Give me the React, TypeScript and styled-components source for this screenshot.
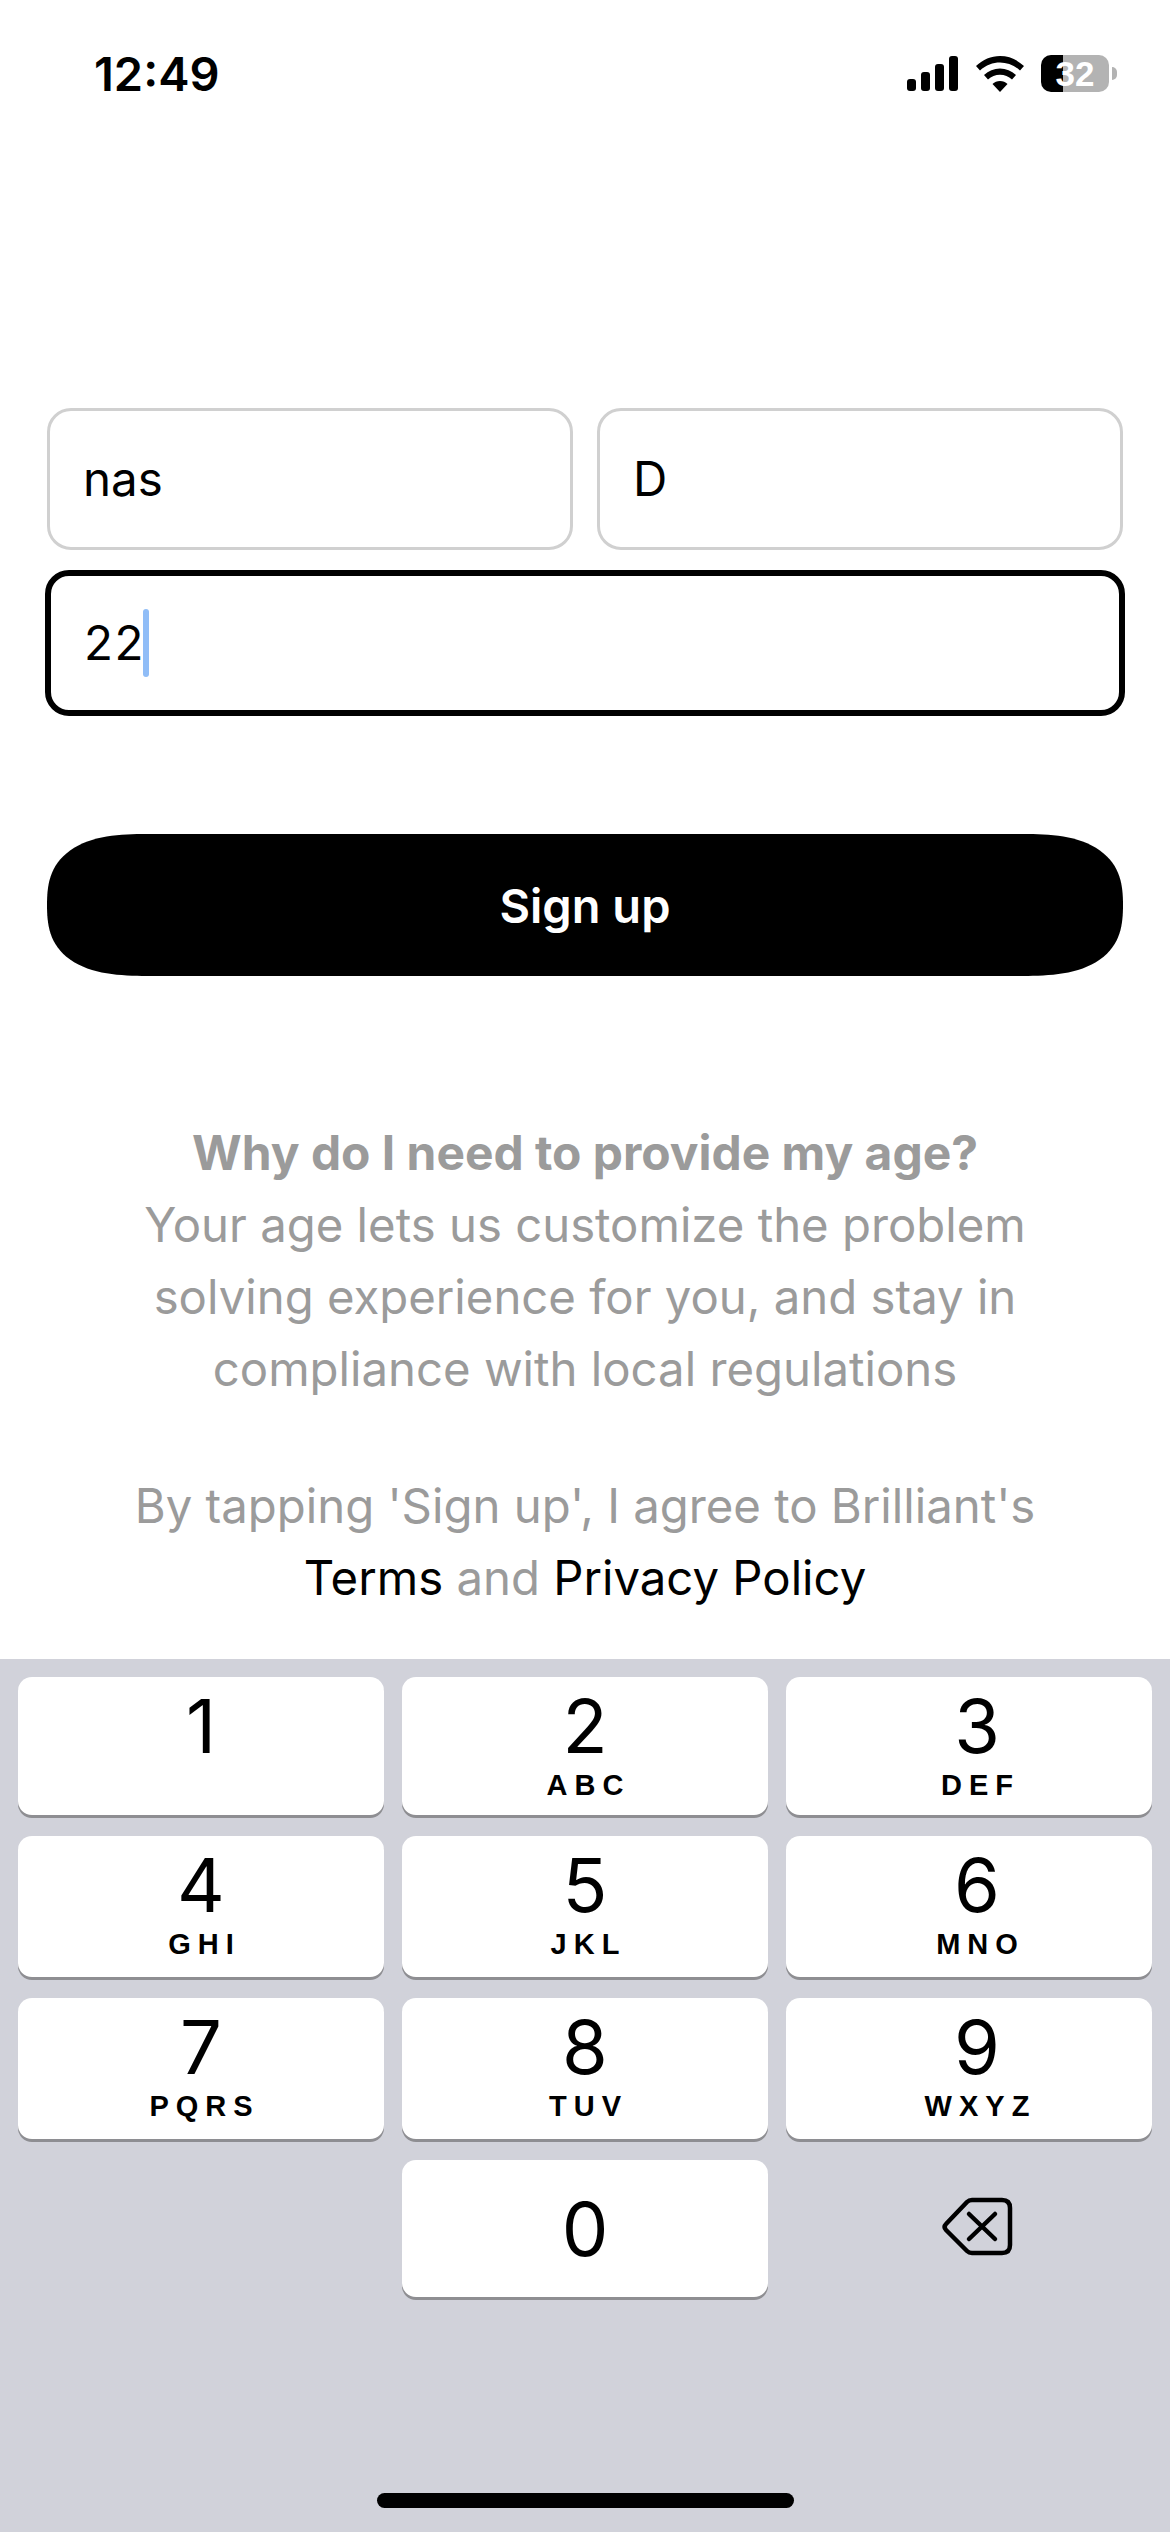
import * as React from 'react';
import styled, { createGlobalStyle } from 'styled-components';

const GlobalStyle = createGlobalStyle`
  html, body {
    margin: 0;
    padding: 0;
    background: #fff;
  }
  * {
    box-sizing: border-box;
  }
`;

const Screen = styled.div`
  width: 1170px;
  height: 2532px;
  display: flex;
  flex-direction: column;
  background: #fff;
  font-family: Inter, "Liberation Sans", sans-serif;
  color: #000;
  overflow: hidden;
`;

const StatusBar = styled.div`
  height: 408px;
  padding: 48px 54px 0 94px;
  display: flex;
  justify-content: space-between;
  align-items: flex-start;
  flex-shrink: 0;
`;

const Clock = styled.div`
  font-size: 47px;
  font-weight: 600;
  line-height: 52px;
`;

const StatusIcons = styled.div`
  display: flex;
  align-items: center;
  gap: 17px;
  padding-top: 7px;
  padding-right: 7px;
`;

const Battery = styled.div`
  width: 68px;
  height: 37px;
  border-radius: 10px;
  background: linear-gradient(to right, #000 32%, #b3b3b3 32%);
  color: #fff;
  font-family: "Liberation Sans", sans-serif;
  font-size: 35px;
  font-weight: 700;
  line-height: 37px;
  text-align: center;
  position: relative;
`;

const BatteryNub = styled.span`
  position: absolute;
  right: -8px;
  top: 12px;
  width: 5px;
  height: 13px;
  border-radius: 0 6px 6px 0;
  background: #b3b3b3;
`;

const Form = styled.div`
  padding: 0 47px;
  display: flex;
  flex-direction: column;
`;

const NameRow = styled.div`
  display: grid;
  grid-template-columns: 1fr 1fr;
  gap: 24px;
  margin-bottom: 20px;
`;

const Field = styled.div<{ $focused?: boolean }>`
  height: ${(p) => (p.$focused ? '146px' : '142px')};
  margin: ${(p) => (p.$focused ? '0 -2px' : '0')};
  border: ${(p) => (p.$focused ? '6px solid #000' : '3px solid #d0d0d0')};
  border-radius: 24px;
  padding-left: 33px;
  padding-bottom: 2px;
  display: flex;
  align-items: center;
  font-size: 47.5px;
  font-weight: 400;
  letter-spacing: ${(p) => (p.$focused ? '1.5px' : '0')};
`;

const Caret = styled.span`
  width: 6px;
  height: 68px;
  border-radius: 3px;
  background: #90bdf7;
  margin-left: -2px;
  margin-top: 2px;
`;

const SignUpButton = styled.button`
  margin-top: 118px;
  height: 142px;
  border: none;
  border-radius: 100px / 71px;
  corner-shape: superellipse(1.4);
  background: #000;
  color: #fff;
  font-family: inherit;
  font-size: 47px;
  font-weight: 600;
`;

const Info = styled.div`
  margin-top: 141px;
  text-align: center;
  font-size: 47.3px;
  line-height: 72px;
  color: #9b9b9b;
`;

const InfoTitle = styled.div`
  font-size: 47.9px;
  font-weight: 700;
`;

const Legal = styled.div`
  margin-top: 65px;
  text-align: center;
  font-size: 47.3px;
  line-height: 72px;
  color: #9b9b9b;
`;

const LegalLink = styled.span`
  color: #000;
`;

const Keyboard = styled.div`
  margin-top: auto;
  height: 873px;
  background: #d1d2da;
  padding: 18px 18px 0;
  position: relative;
  display: grid;
  grid-template-columns: repeat(3, 366px);
  grid-template-rows: 138px 141px 141px 137px;
  column-gap: 18px;
  row-gap: 21px;
  align-content: start;
`;

const Key = styled.div<{ $shifted?: boolean; $centered?: boolean }>`
  background: #fff;
  border-radius: 14px;
  box-shadow: 0 3px 0 #8e8e92;
  display: flex;
  flex-direction: column;
  align-items: center;
  justify-content: ${(p) => (p.$centered ? 'center' : 'flex-start')};
  padding-top: ${(p) => (p.$centered ? '0' : '7px')};
  padding-left: ${(p) => (p.$shifted ? '16px' : '0')};
`;

const Digit = styled.div`
  font-size: 74px;
  line-height: 84px;
  font-weight: 400;
`;

const Letters = styled.div`
  font-family: "Liberation Sans", sans-serif;
  font-size: 29px;
  font-weight: 700;
  line-height: 30px;
  letter-spacing: 7px;
  margin-top: 2px;
  margin-right: -7px;
`;

const BlankKey = styled.div``;

const BackspaceKey = styled.div`
  display: flex;
  align-items: center;
  justify-content: center;
  padding-left: 16px;
  padding-bottom: 3px;
`;

const HomeIndicator = styled.div`
  position: absolute;
  left: 377px;
  bottom: 24px;
  width: 417px;
  height: 15px;
  border-radius: 8px;
  background: #000;
`;

const keys = [
  ['1', ''],
  ['2', 'ABC'],
  ['3', 'DEF'],
  ['4', 'GHI'],
  ['5', 'JKL'],
  ['6', 'MNO'],
  ['7', 'PQRS'],
  ['8', 'TUV'],
  ['9', 'WXYZ'],
];

const App: React.FunctionComponent = () => {
  return (
    <Screen>
      <GlobalStyle />
      <StatusBar>
        <Clock>12:49</Clock>
        <StatusIcons>
          <svg width="52" height="35" viewBox="0 0 52 35" fill="#000">
            <rect x="0" y="23" width="9" height="12" rx="3" />
            <rect x="14" y="16" width="9" height="19" rx="3" />
            <rect x="28" y="8" width="9" height="27" rx="3" />
            <rect x="42" y="0" width="9" height="35" rx="3" />
          </svg>
          <svg width="48" height="36" viewBox="0 0 48 36" fill="#000">
            <path d="M24 0C15 0 7 3.500 0 10l4 4.500C10 9 17 6.500 24 6.500S38 9 44 14.500l4-4.500C41 3.500 33 0 24 0Z" />
            <path d="M24 12.500c-6 0-11.500 2.300-16 6.500l4 4.500c3.300-3 7.500-4.700 12-4.700s8.700 1.700 12 4.700l4-4.500c-4.500-4.200-10-6.500-16-6.500Z" />
            <path d="M24 25c-3 0-5.500 1-7.500 3L24 36l7.500-8c-2-2-4.500-3-7.500-3Z" />
          </svg>
          <Battery>
            32
            <BatteryNub />
          </Battery>
        </StatusIcons>
      </StatusBar>
      <Form>
        <NameRow>
          <Field>nas</Field>
          <Field>D</Field>
        </NameRow>
        <Field $focused>
          22
          <Caret />
        </Field>
        <SignUpButton>Sign up</SignUpButton>
        <Info>
          <InfoTitle>Why do I need to provide my age?</InfoTitle>
          Your age lets us customize the problem
          <br />
          solving experience for you, and stay in
          <br />
          compliance with local regulations
        </Info>
        <Legal>
          By tapping 'Sign up', I agree to Brilliant's
          <br />
          <LegalLink>Terms</LegalLink> and <LegalLink>Privacy Policy</LegalLink>
        </Legal>
      </Form>
      <Keyboard>
        {keys.map(([digit, letters], i) => (
          <Key key={digit} $shifted={i % 3 === 2}>
            <Digit>{digit}</Digit>
            {letters && <Letters>{letters}</Letters>}
          </Key>
        ))}
        <BlankKey />
        <Key $centered>
          <Digit>0</Digit>
        </Key>
        <BackspaceKey>
          <svg width="72" height="62" viewBox="0 0 72 62" fill="none" stroke="#000" strokeWidth="4.500" strokeLinecap="round" strokeLinejoin="round">
            <path d="M31 4H61Q69 4 69 12V49Q69 57 61 57H31Q28 57 26 55L5 34Q2 31 5 28L26 6Q28 4 31 4Z" />
            <path d="M28 18L54 43M54 18L28 43" />
          </svg>
        </BackspaceKey>
        <HomeIndicator />
      </Keyboard>
    </Screen>
  );
};

export default App;
